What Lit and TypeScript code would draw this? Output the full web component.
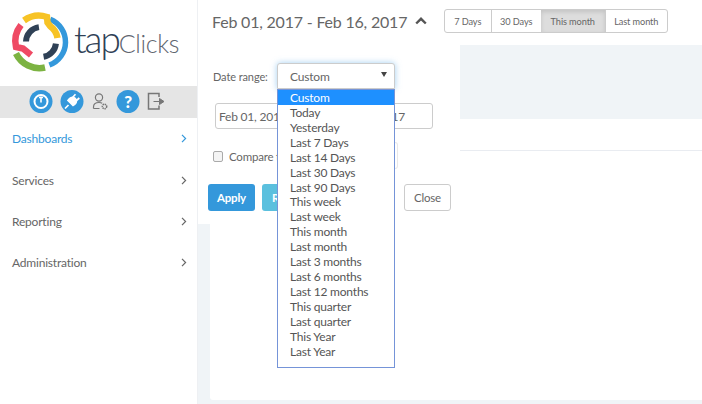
import { LitElement, html, css, svg } from "lit";
import { customElement } from "lit/decorators.js";

function arc(r: number, a0: number, a1: number) {
  const p = (a: number, rr: number) => {
    const t = ((a - 90) * Math.PI) / 180;
    return `${(41 + rr * Math.cos(t)).toFixed(2)} ${(41 + rr * Math.sin(t)).toFixed(2)}`;
  };
  return `M${p(a0, r)} A${r} ${r} 0 ${a1 - a0 > 180 ? 1 : 0} 1 ${p(a1, r)}`;
}

const OPTIONS = ["Custom", "Today", "Yesterday", "Last 7 Days", "Last 14 Days", "Last 30 Days", "Last 90 Days", "This week", "Last week", "This month", "Last month", "Last 3 months", "Last 6 months", "Last 12 months", "This quarter", "Last quarter", "This Year", "Last Year"];
const NAV = ["Dashboards", "Services", "Reporting", "Administration"];
const RANGES = ["7 Days", "30 Days", "This month", "Last month"];

@customElement("app-root")
export class AppRoot extends LitElement {
  static styles = css`
    :host { display: grid; grid-template-columns: 198px 504px; height: 404px; width: 702px; overflow: hidden; font-family: Lato, sans-serif; color: #666; font-size: 12px; letter-spacing: -0.2px; }
    * { box-sizing: border-box; }
    .side { background: #fff; border-right: 1px solid #eef0f3; display: flex; flex-direction: column; }
    .logo { height: 86px; display: flex; align-items: flex-start; }
    .logo svg { display: block; flex: none; }
    .brand { margin: 14px 0 0 -8px; font-size: 37px; line-height: 50px; font-weight: 300; letter-spacing: -2.1px; color: #2f4156; white-space: nowrap; }
    .brand span { color: #5f6670; font-size: 25px; letter-spacing: -0.3px; }
    .tools { height: 32px; background: #e5e5e5; display: flex; align-items: center; padding-left: 29px; }
    .tools svg { display: block; flex: none; }
    .nav { list-style: none; margin: -2px 0 0; padding: 0; }
    .nav li { height: 41px; padding: 0 10px 0 12px; display: flex; align-items: center; justify-content: space-between; color: #666; }
    .nav li:first-child { color: #3498db; height: 44px; }
    .nav li svg { display: block; }
    .main { position: relative; background: #f0f4f7; display: flex; flex-direction: column; }
    .head { height: 45px; background: #fff; display: flex; align-items: flex-start; padding: 9px 0 0 14px; }
    .title { display: flex; align-items: center; width: 232px; flex: none; height: 20px; margin-top: 2px; font-size: 16px; white-space: nowrap; color: #666; gap: 8px; }
    .group { display: grid; grid-template-columns: 45.500px 50.500px 63.500px 62.500px; height: 24px; border: 1px solid #ccc; border-radius: 3px; background: #fff; font-size: 9.200px; letter-spacing: -0.1px; overflow: hidden; }
    .group div { display: flex; align-items: center; justify-content: center; border-left: 1px solid #ccc; color: #666; }
    .group div:first-child { border-left: 0; }
    .group .on { background: #ddd; box-shadow: inset 0 2px 4px rgba(0,0,0,.12); border-left: 0; }
    .card { margin: 74px 0 4px 12px; flex: 1; background: #fff; border-radius: 3px 0 0 3px; }
    .rule { margin-top: 31px; height: 1px; background: #e9ecf1; }
    .pop { position: absolute; left: 0; top: 45px; width: 262px; height: 179px; background: #fff; padding: 0 0 0 10px; }
    .range { display: flex; align-items: center; padding-top: 18px; margin-left: 5px; font-size: 11px; letter-spacing: -0.1px; }
    .range label { width: 64px; }
    .select { width: 118px; height: 26px; border: 1px solid #ccc; border-radius: 3px 3px 0 0; box-shadow: 0 0 6px rgba(102,175,233,.6); display: flex; align-items: center; justify-content: space-between; padding: 0 7px 0 12px; background: #fff; font-size: 12px; letter-spacing: -0.2px; }
    .caret { width: 0; height: 0; border: 3px solid transparent; border-top: 5px solid #444; border-bottom: 0; margin-top: -3px; }
    .dates { display: flex; margin: 14px 0 0 7px; width: 218px; height: 26px; border: 1px solid #ccc; border-radius: 3px; align-items: center; justify-content: space-between; padding: 0 27px 0 3px; }
    .compare { display: flex; align-items: center; margin: 20px 0 0 5px; gap: 6px; font-size: 11.500px; position: relative; height: 14px; }
    .check { width: 10px; height: 11px; border: 1px solid #aaa; border-radius: 2px; background: #f4f4f4; }
    .ghost { position: absolute; left: 173px; top: -7px; width: 12px; height: 27px; border: 1px solid #e8e8e8; border-left: 0; border-radius: 0 3px 3px 0; }
    .actions { display: flex; margin-top: 21px; font-size: 11.500px; }
    .btn { height: 27px; border-radius: 3px; display: flex; align-items: center; justify-content: center; }
    .apply { width: 47px; background: #3498db; color: #fff; font-weight: 700; }
    .reset { width: 60px; margin-left: 7px; background: #5bc0de; color: #fff; font-weight: 700; justify-content: flex-start; padding-left: 10px; }
    .close { width: 47px; margin-left: 82px; border: 1px solid #ccc; color: #666; }
    .list { position: absolute; left: 79px; top: 44px; width: 118px; height: 279px; border: 1px solid #7594d8; background: #fff; margin: 0; padding: 0; list-style: none; color: #555; }
    .list li { height: 14.930px; line-height: 15px; padding-left: 12px; white-space: nowrap; }
    .list li:first-child { background: #1e90ff; color: #fff; }
  `;

  private logo() {
    return svg`<svg width="82" height="84" viewBox="0 0 82 82" aria-hidden="true">
      <g fill="none" stroke-linecap="butt">
        <path d=${arc(24.5, 22, 160)} stroke="#3498db" stroke-width="5.500"/>
        <path d="M16 52.500 A26 26 0 0 0 45 66.500" stroke="#7cb342" stroke-width="6.500"/>
        <path d="M21 24 A26 26 0 0 0 16 46 L23 47.500 L31 54" stroke="#ef4a64" stroke-width="6.500"/>
        <path d="M24 19.500 A26 26 0 0 1 47 16 L47.500 21.500 L50 25 A18 18 0 0 1 57.500 37" stroke="#f7c325" stroke-width="6.500"/>
        <path d=${arc(15, 272, 352)} stroke="#2f4156" stroke-width="6"/>
        <path d=${arc(15, 96, 170)} stroke="#2f4156" stroke-width="6"/>
      </g></svg>`;
  }

  private tools() {
    return svg`<svg width="140" height="32" viewBox="0 0 140 32" aria-hidden="true">
      <circle cx="12" cy="15.500" r="11.500" fill="#3498db"/>
      <circle cx="12" cy="15.500" r="6.500" fill="none" stroke="#fff" stroke-width="2"/>
      <path d="M12 10.500v6M10 11.500h4" stroke="#fff" stroke-width="1.600" fill="none"/>
      <circle cx="43" cy="15.500" r="11.500" fill="#3498db"/>
      <path d="M36 22.500l3.500-3.500M39 14.500l5 5 2-1.500c1.600-1.600 1.600-3.400.6-5l-1-1c-1.600-1-3.400-1-5 .6zM44 11l2.500-2.800M47.500 14.500l2.800-2.500" stroke="#fff" stroke-width="1.700" fill="#fff"/>
      <circle cx="70" cy="11.500" r="3.600" fill="none" stroke="#777" stroke-width="1.200"/>
      <path d="M64.500 22.500v-1.500c0-2.700 2-4.500 5.500-4.500 1.300 0 2.400.2 3.200.7M64.500 22.500h6" fill="none" stroke="#777" stroke-width="1.200"/>
      <circle cx="75.500" cy="20.500" r="2.200" fill="none" stroke="#777" stroke-width="1.500" stroke-dasharray="1.300 .6"/>
      <circle cx="99" cy="15.500" r="11.500" fill="#3498db"/>
      <text x="99" y="21.500" text-anchor="middle" fill="#fff" font-family="Lato, sans-serif" font-size="17" font-weight="900">?</text>
      <path d="M130 11v-3.500h-10.500v15.500h10.500v-3.500" fill="none" stroke="#777" stroke-width="1.500"/>
      <path d="M124.500 15.500h6v-3l4.500 3-4.500 3v-3" fill="#777" stroke="#777" stroke-width="1"/>
    </svg>`;
  }

  render() {
    return html`
      <aside class="side">
        <div class="logo">${this.logo()}<div class="brand">tap<span>Clicks</span></div></div>
        <div class="tools">${this.tools()}</div>
        <ul class="nav">
          ${NAV.map((n) => html`<li>${n}<svg width="6" height="9" viewBox="0 0 6 9" aria-hidden="true"><path d="M1 .8l3.600 3.700L1 8.200" fill="none" stroke="currentColor" stroke-width="1.200"/></svg></li>`)}
        </ul>
      </aside>
      <main class="main">
        <div class="head">
          <div class="title">Feb 01, 2017 - Feb 16, 2017
            <svg width="12" height="8" viewBox="0 0 12 8" aria-hidden="true"><path d="M1.200 6.500L6 1.800l4.800 4.700" fill="none" stroke="#555" stroke-width="2.400"/></svg>
          </div>
          <div class="group">${RANGES.map((r) => html`<div class=${r === "This month" ? "on" : ""}>${r}</div>`)}</div>
        </div>
        <div class="card"><div class="rule"></div></div>
        <div class="pop">
          <div class="range"><label>Date range:</label><div class="select">Custom<i class="caret"></i></div></div>
          <div class="dates"><span>Feb 01, 2017</span><span>Feb 16, 2017</span></div>
          <div class="compare"><i class="check"></i>Compare to<i class="ghost"></i></div>
          <div class="actions">
            <div class="btn apply">Apply</div>
            <div class="btn reset">Reset</div>
            <div class="btn close">Close</div>
          </div>
          <ul class="list">${OPTIONS.map((o) => html`<li>${o}</li>`)}</ul>
        </div>
      </main>
    `;
  }
}
